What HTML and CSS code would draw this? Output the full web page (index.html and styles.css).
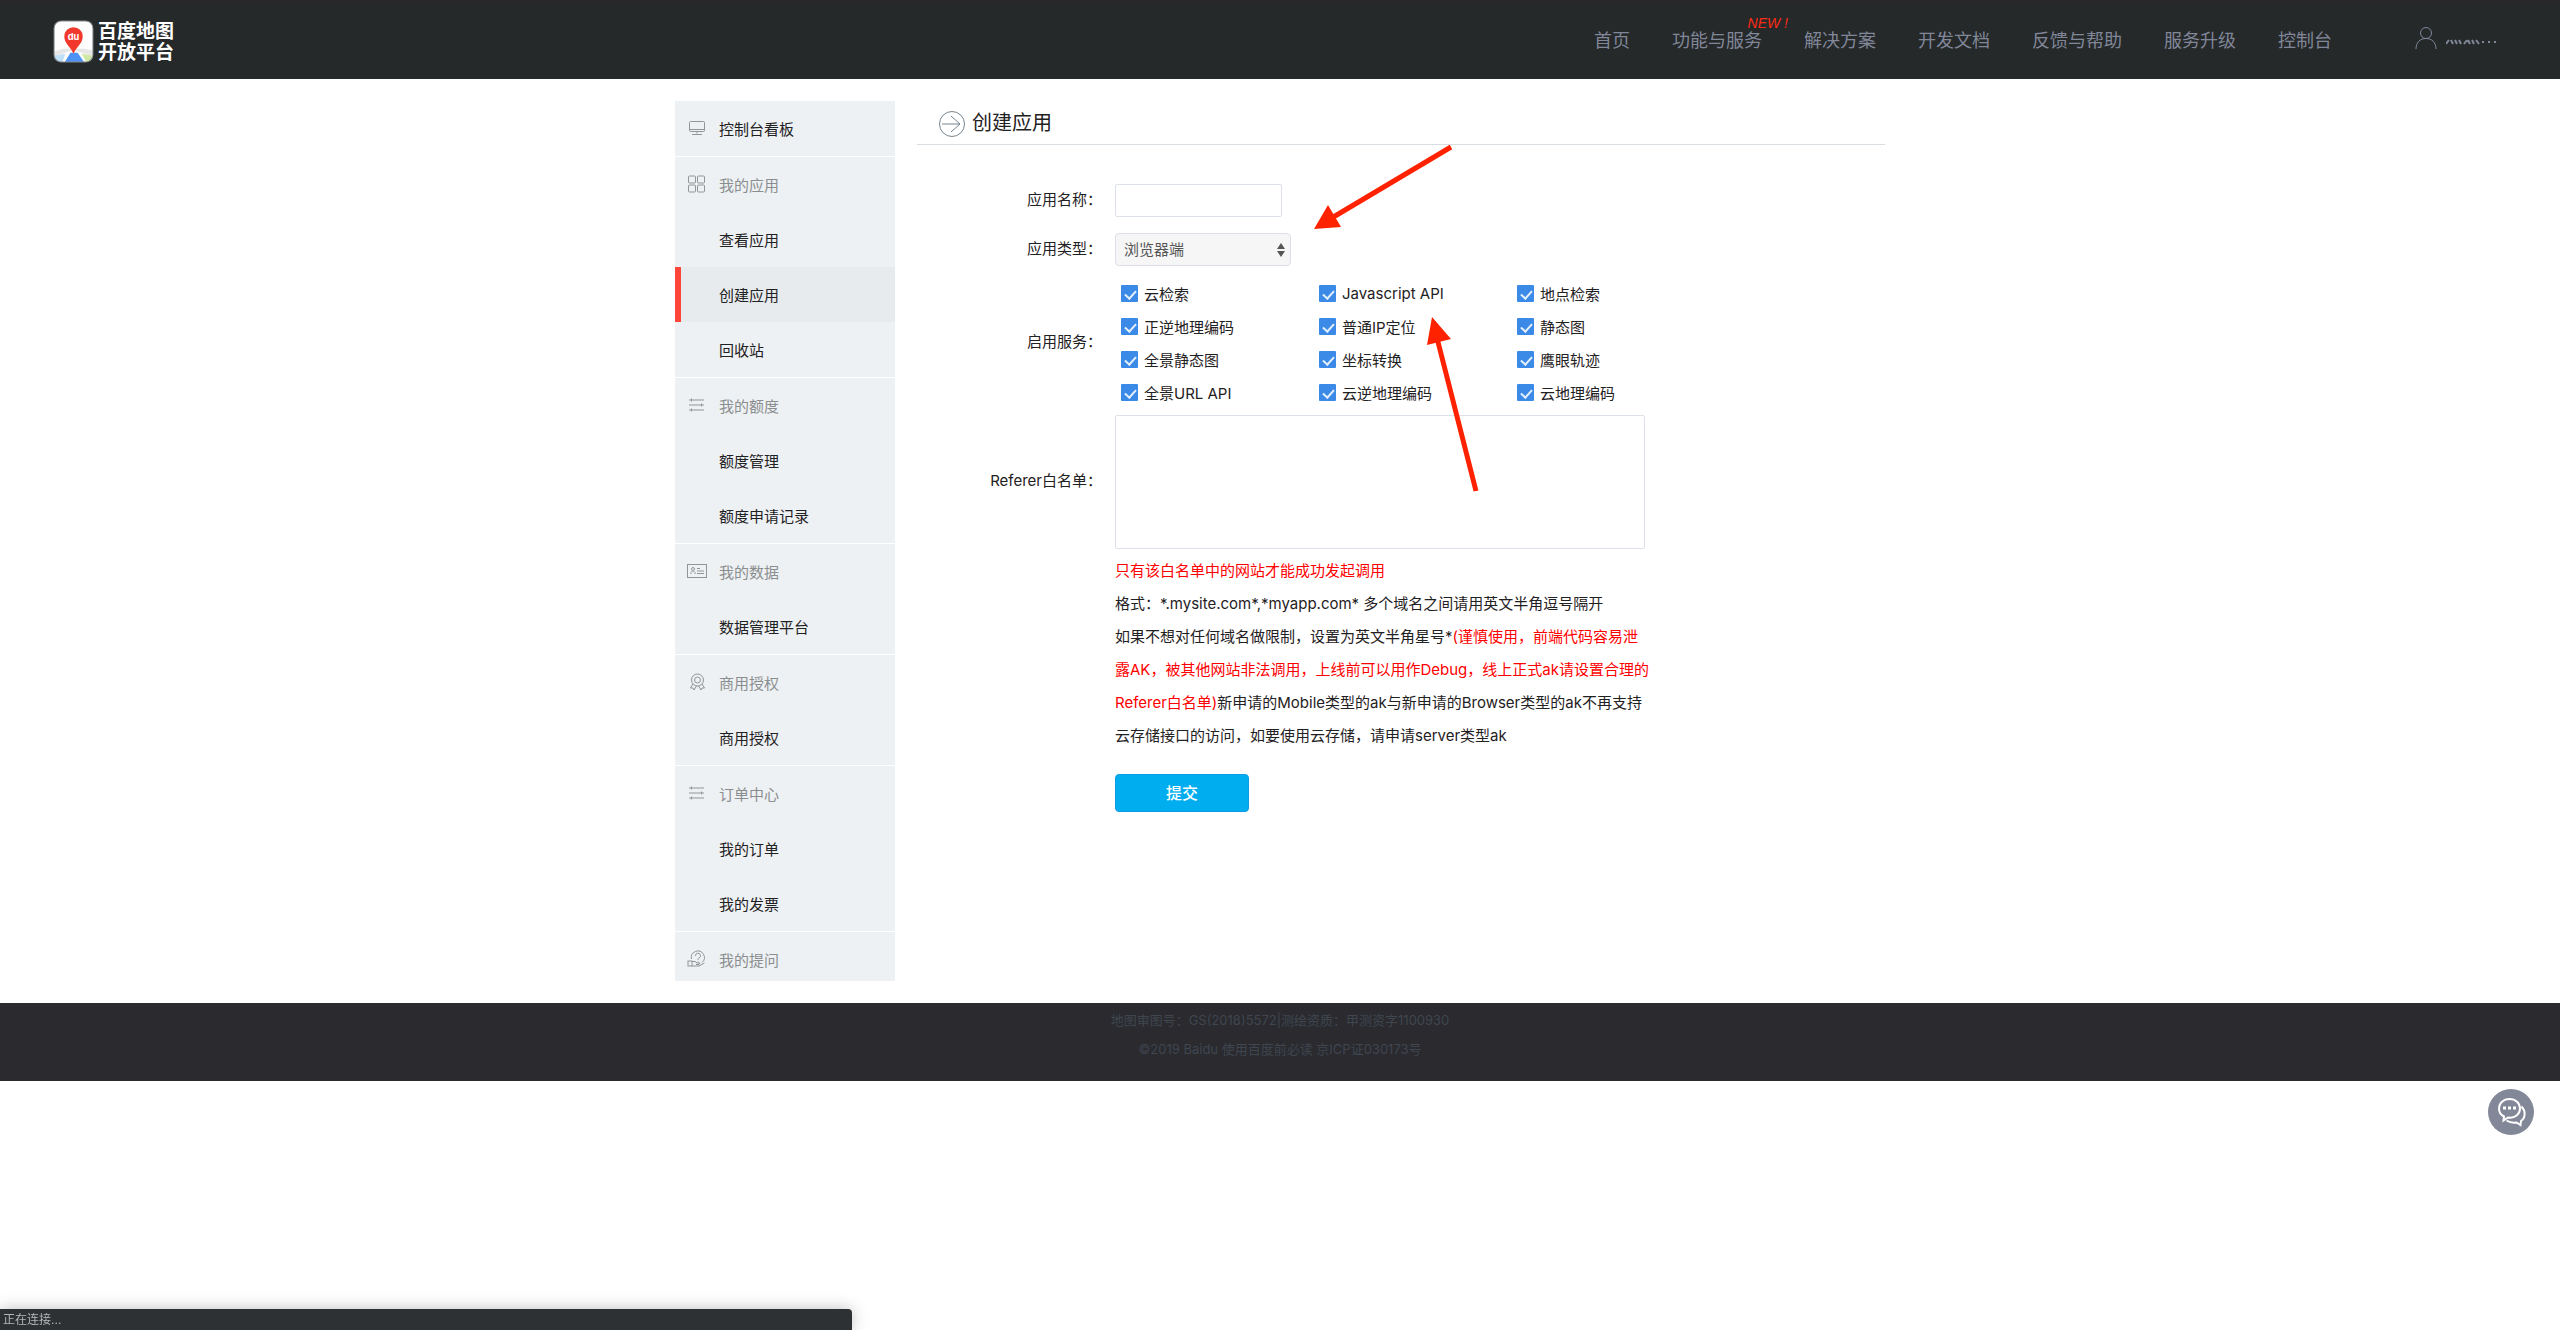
FILE: index.html
```html
<!DOCTYPE html>
<html lang="zh-CN">
<head>
<meta charset="utf-8">
<title>创建应用 - 百度地图开放平台</title>
<link rel="stylesheet" href="styles.css">
</head>
<body>
<header class="topbar">
  <a class="brand" href="#">
    <svg class="brand-mark" viewBox="0 0 40 42" aria-hidden="true">
      <defs><clipPath id="tile"><rect x="1" y="1" width="38" height="40" rx="7"/></clipPath></defs>
      <g clip-path="url(#tile)">
        <rect width="40" height="42" fill="#fdfdfd"/>
        <path d="M0 36L20 29L40 36V30L30 28H10L0 31Z" fill="#e6e6e6"/>
        <path d="M0 35L12 33L9 42H0Z" fill="#bfe0f7"/>
        <path d="M28 33L40 35V42H33Z" fill="#cfe9a4"/>
        <path d="M17 32H24L31 42H11Z" fill="#4c93f5"/>
        <path d="M20 33C18 27 11 23 11 16A9 9 0 0 1 29 16C29 23 22 27 20 33Z" fill="#f2382d"/>
      </g>
      <rect x="1" y="1" width="38" height="40" rx="7" fill="none" stroke="#85888a"/>
      <text x="20" y="20" text-anchor="middle" class="brand-du">du</text>
    </svg>
    <span class="brand-name">百度地图<br>开放平台</span>
  </a>
  <nav class="topnav">
    <a href="#">首页</a>
    <a href="#" class="has-flag">功能与服务<em class="flag">NEW !</em></a>
    <a href="#">解决方案</a>
    <a href="#">开发文档</a>
    <a href="#">反馈与帮助</a>
    <a href="#">服务升级</a>
    <a href="#">控制台</a>
  </nav>
  <a class="account" href="#" aria-label="账户">
    <svg class="account-icon" viewBox="0 0 24 24" aria-hidden="true"><circle cx="12" cy="7" r="5.500"/><path d="M2 23C2 16.500 6 12.500 12 12.500S22 16.500 22 23"/></svg>
    <svg class="account-name" viewBox="0 0 54 8" aria-hidden="true"><path d="M0 6L3 2M5 2L7 6M9 2L11 6M13 2L15 6M18 6L21 2M22 2L24 6M26 2L28 6M30 2L33 6"/><path d="M36 4h2M42 4h2M48 4h2"/></svg>
  </a>
</header>

<div class="page">
  <aside class="sidebar">
    <ul class="group">
      <li><a class="item" href="#"><svg class="icon" viewBox="0 0 20 20"><rect x="2.500" y="3.500" width="15" height="10" rx="1"/><path d="M3 11.500h14M10 13.500v2M5 16.500h10"/></svg>控制台看板</a></li>
    </ul>
    <ul class="group">
      <li class="item head"><svg class="icon" viewBox="0 0 20 20"><rect x="1.500" y="2" width="7" height="7" rx="1"/><rect x="10.500" y="2" width="7" height="7" rx="1"/><rect x="1.500" y="11" width="7" height="7" rx="1"/><rect x="10.500" y="11" width="7" height="7" rx="1"/></svg>我的应用</li>
      <li><a class="item" href="#">查看应用</a></li>
      <li><a class="item active" href="#">创建应用</a></li>
      <li><a class="item" href="#">回收站</a></li>
    </ul>
    <ul class="group">
      <li class="item head"><svg class="icon" viewBox="0 0 20 20"><path d="M2 5h15M2 10h15M2 15h15M4.500 3.500v3M14.500 8.500v3M4.500 13.500v3"/></svg>我的额度</li>
      <li><a class="item" href="#">额度管理</a></li>
      <li><a class="item" href="#">额度申请记录</a></li>
    </ul>
    <ul class="group">
      <li class="item head"><svg class="icon" viewBox="0 0 20 20"><rect x=".5" y="3.500" width="19" height="13"/><path d="M4 13v-1.500l1.500-1.500M8 13v-1.500l-1.500-1.500M10 7.500h3M10 10h7M10 12.500h7"/><circle cx="6" cy="8" r="1.500"/></svg>我的数据</li>
      <li><a class="item" href="#">数据管理平台</a></li>
    </ul>
    <ul class="group">
      <li class="item head"><svg class="icon" viewBox="0 0 20 20"><circle cx="10.500" cy="8" r="6"/><circle cx="10.500" cy="8" r="3"/><path d="M6 12L3.500 16H6L7 18L9.500 14M15 12L17.500 16H15L14 18L11.500 14"/></svg>商用授权</li>
      <li><a class="item" href="#">商用授权</a></li>
    </ul>
    <ul class="group">
      <li class="item head"><svg class="icon" viewBox="0 0 20 20"><path d="M2 5h15M2 10h15M2 15h15M4.500 3.500v3M14.500 8.500v3M4.500 13.500v3"/></svg>订单中心</li>
      <li><a class="item" href="#">我的订单</a></li>
      <li><a class="item" href="#">我的发票</a></li>
    </ul>
    <ul class="group last">
      <li class="item head"><svg class="icon" viewBox="0 0 20 20"><path d="M4.500 10A6.500 6.500 0 1 1 15 13.500M8.500 7A2.500 2.500 0 1 1 12 9C11 9.500 11 10 11 11M11 12.500v1"/><rect x="1" y="12" width="4" height="5"/><path d="M5 12.500H8L10 14H13L12 15.500H9M5 17H12L17.500 14"/></svg>我的提问</li>
    </ul>
  </aside>

  <main class="main">
    <h1 class="title"><svg class="title-icon" viewBox="0 0 28 28" aria-hidden="true"><circle cx="14" cy="14" r="12.500"/><path d="M4 14h18M13 6l9 8l-9 8"/></svg>创建应用</h1>

    <form class="form">
      <label class="label" for="name">应用名称：</label>
      <div class="field"><input class="text" id="name" type="text"></div>

      <label class="label label-kind" for="kind">应用类型：</label>
      <div class="field select-wrap">
        <select class="select" id="kind"><option>浏览器端</option></select>
        <svg class="select-arrows" viewBox="0 0 8 14" aria-hidden="true"><path d="M4 0L8 6H0ZM4 14L0 8H8Z"/></svg>
      </div>

      <span class="label label-checks" id="services">启用服务：</span>
      <div class="field checks" role="group" aria-labelledby="services">
        <label><input type="checkbox" checked>云检索</label>
        <label><input type="checkbox" checked>Javascript API</label>
        <label><input type="checkbox" checked>地点检索</label>
        <label><input type="checkbox" checked>正逆地理编码</label>
        <label><input type="checkbox" checked>普通IP定位</label>
        <label><input type="checkbox" checked>静态图</label>
        <label><input type="checkbox" checked>全景静态图</label>
        <label><input type="checkbox" checked>坐标转换</label>
        <label><input type="checkbox" checked>鹰眼轨迹</label>
        <label><input type="checkbox" checked>全景URL API</label>
        <label><input type="checkbox" checked>云逆地理编码</label>
        <label><input type="checkbox" checked>云地理编码</label>
      </div>

      <label class="label label-area" for="referer">Referer白名单：</label>
      <div class="field"><textarea class="area" id="referer"></textarea></div>

      <div class="after">
        <p class="help"><span class="warn">只有该白名单中的网站才能成功发起调用</span><br>格式：*.mysite.com*,*myapp.com* 多个域名之间请用英文半角逗号隔开<br>如果不想对任何域名做限制，设置为英文半角星号*<span class="warn">(谨慎使用，前端代码容易泄<br>露AK，被其他网站非法调用，上线前可以用作Debug，线上正式ak请设置合理的<br>Referer白名单)</span>新申请的Mobile类型的ak与新申请的Browser类型的ak不再支持<br>云存储接口的访问，如要使用云存储，请申请server类型ak</p>
        <button class="submit" type="submit">提交</button>
      </div>
    </form>

    <svg class="arrows" viewBox="0 0 240 360" aria-hidden="true">
      <path d="M174 3L48 78M199 347L160 194"/>
      <path class="tip" d="M37 85L51 61L64 83ZM155 173L150 201L174 195Z"/>
    </svg>
  </main>
</div>

<footer class="footer">
  <p>地图审图号：GS(2018)5572|测绘资质：甲测资字1100930</p>
  <p>©2019 Baidu 使用百度前必读 京ICP证030173号</p>
</footer>

<button class="chat" type="button" aria-label="在线咨询">
  <svg viewBox="0 0 46 46" aria-hidden="true"><path d="M16 27.500L15.500 31.500L20 28.500C27 29.500 32 25 32 19.500C32 14 27.500 10 21.500 10C15.500 10 11 14 11 19.500C11 23 13 26 16 27.500Z"/><path d="M33.500 17.500C38 22 37.500 29 33 32L32.500 36L28.500 33.500C25 34 21 33 18.500 31.500"/><path class="dots" d="M15 19h3M20 19h3M25 19h3"/></svg>
</button>
<div class="status">正在连接...</div>
</body>
</html>
```
FILE: styles.css
```css
* { box-sizing: border-box; }

body {
  margin: 0;
  background: #fff;
  color: #1f2123;
  font-family: Inter, "Noto Sans CJK SC", sans-serif;
  font-size: 15px;
}

a { color: inherit; text-decoration: none; }
ul, p, h1 { margin: 0; padding: 0; }
ul { list-style: none; }
svg { display: block; fill: none; }

/* header */
.topbar {
  display: flex;
  align-items: flex-start;
  height: 79px;
  padding: 0 60px 0 53px;
  background: #25292a;
  border-top: 3px solid #28272a;
  color: #818799;
}
.brand { display: flex; gap: 4px; margin: 17px auto 0 0; }
.brand-mark { width: 41px; height: 43px; }
.brand-du { font: bold 9px Inter, sans-serif; fill: #fff; }
.brand-name {
  padding-top: 1px;
  color: #fff;
  font-size: 19px;
  font-weight: 700;
  line-height: 21px;
}
.topnav { display: flex; gap: 42px; font-size: 18px; line-height: 75px; }
.has-flag { position: relative; }
.flag {
  position: absolute;
  top: 12px;
  right: -26px;
  color: #ff2a12;
  font: italic 14px/16px "Liberation Sans", sans-serif;
}
.account { display: flex; align-items: center; gap: 8px; margin: 23px 0 0 82px; }
.account-icon { width: 24px; height: 24px; stroke: #818799; }
.account-name { width: 54px; height: 8px; margin-top: 8px; stroke: #818799; stroke-width: 2; }

/* page */
.page {
  display: flex;
  align-items: flex-start;
  gap: 22px;
  max-width: 1210px;
  margin: 0 auto;
  padding: 22px 0;
}

.sidebar { flex: 0 0 220px; }
.group { background: #edf1f3; border-bottom: 1px solid #fff; }
.last { height: 49px; overflow: hidden; border-bottom: 0; }
.item {
  display: flex;
  align-items: center;
  height: 55px;
  padding: 0 0 1px 44px;
}
.head { color: #8b8e90; }
.icon { width: 20px; height: 20px; margin: 0 12px 0 -32px; stroke: #929597; }
.active {
  padding-left: 38px;
  background: #e7ebee;
  border-left: 6px solid #ff4439;
}

.main { position: relative; flex: 1; }
.title {
  display: flex;
  align-items: center;
  gap: 6px;
  height: 44px;
  padding: 0 0 2px 21px;
  border-bottom: 1px solid #d9dee2;
  font-size: 20px;
  font-weight: 400;
}
.title-icon { width: 28px; height: 28px; margin-top: 4px; stroke: #77858f; }

/* form */
.form {
  display: grid;
  grid-template-columns: 185px 550px;
  column-gap: 13px;
  padding-top: 39px;
}
.label { text-align: right; line-height: 31px; }
.label-kind { margin-top: 16px; }
.label-checks { line-height: 130px; }
.label-area { line-height: 132px; }
.field { display: flex; }
.text, .select, .area {
  border: 1px solid #dce0e8;
  border-radius: 2px;
  background: #fff;
  font: inherit;
}
.text { width: 167px; height: 33px; }
.select-wrap { position: relative; margin: 16px 0 11px; }
.select {
  width: 176px;
  height: 33px;
  padding: 0 8px;
  appearance: none;
  background: #f6f6f6;
  border-radius: 4px;
  color: #555;
}
.select-arrows { position: absolute; left: 162px; top: 10px; width: 8px; height: 14px; fill: #555; pointer-events: none; }
.checks {
  display: grid;
  grid-template-columns: repeat(3, 198px);
  grid-auto-rows: 33px;
  padding-left: 6px;
  margin-bottom: 6px;
}
.checks label { display: flex; align-items: center; gap: 6px; }
.checks input {
  position: relative;
  width: 17px;
  height: 17px;
  margin: 0;
  appearance: none;
  background: #3b8ae8;
  border-radius: 1px;
}
.checks input::after {
  content: "";
  position: absolute;
  left: 6px;
  top: 3px;
  width: 5px;
  height: 9px;
  border: solid #e4effc;
  border-width: 0 2px 2px 0;
  transform: rotate(42deg);
}
.area { width: 530px; height: 134px; resize: none; }
.after { grid-column: 2; padding-top: 5px; }
.help { line-height: 33px; white-space: nowrap; }
.warn { color: #f00; }
.submit {
  width: 134px;
  height: 38px;
  margin-top: 22px;
  padding: 0;
  border: 1px solid #0a9de6;
  border-radius: 4px;
  background: #00aeef;
  color: #fff;
  font: 500 16px/34px Inter, "Noto Sans CJK SC", sans-serif;
}

/* annotation arrows lie over the form */
.arrows {
  position: absolute;
  left: 360px;
  top: 43px;
  width: 240px;
  height: 360px;
  stroke: #ff2200;
  stroke-width: 5;
  pointer-events: none;
}
.arrows .tip { fill: #ff2200; stroke: none; }

.footer {
  height: 78px;
  padding-top: 3px;
  background: #2a2a2f;
  color: #3f4650;
  font-size: 13px;
  line-height: 29px;
  text-align: center;
}

.chat {
  position: fixed;
  right: 26px;
  top: 1089px;
  width: 46px;
  height: 46px;
  padding: 0;
  border: 0;
  border-radius: 50%;
  background: #838899;
}
.chat svg { stroke: #fff; stroke-width: 2; }
.chat .dots { stroke-width: 3; }

.status {
  position: fixed;
  left: 0;
  bottom: 0;
  width: 33.3%;
  height: 21px;
  padding-left: 3px;
  background: #2d3134;
  border-radius: 0 4px 0 0;
  box-shadow: 0 0 16px rgba(0, 0, 0, .25);
  color: #b4b6b8;
  font-size: 12px;
  line-height: 21px;
}
```
